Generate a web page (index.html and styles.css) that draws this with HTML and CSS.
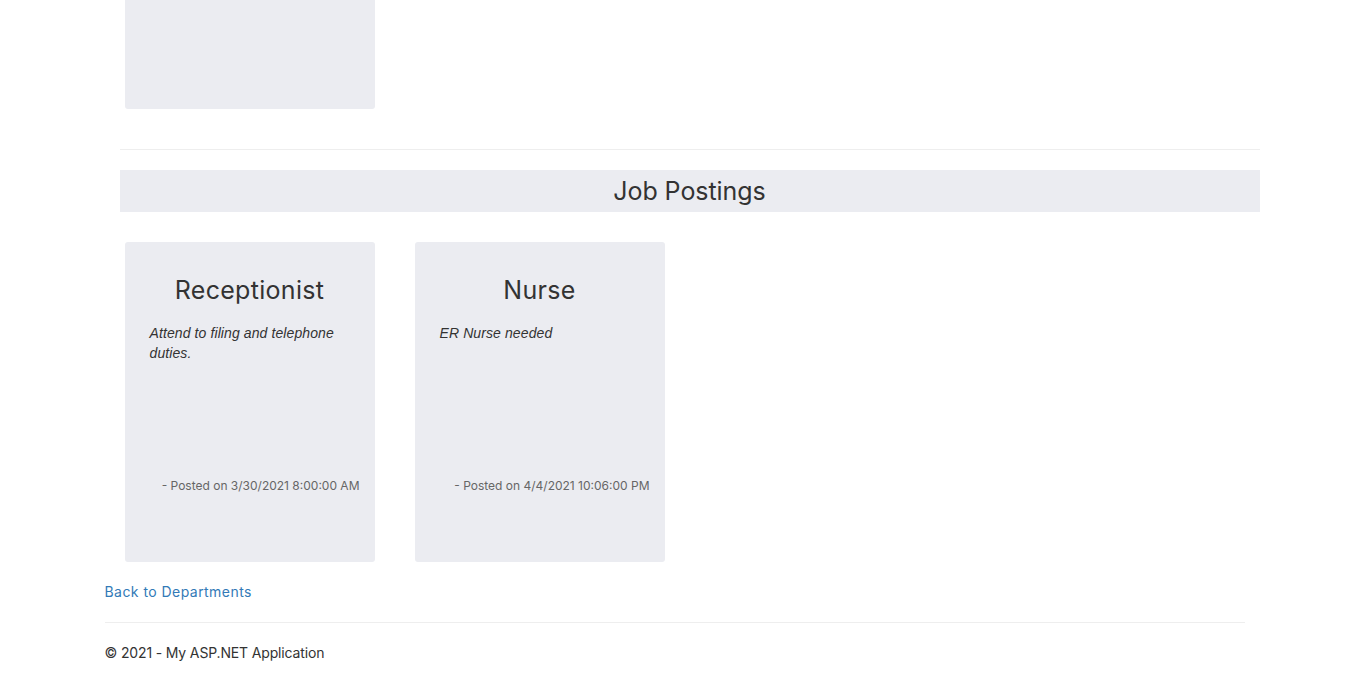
FILE: index.html
```html
<!DOCTYPE html>
<html>
<head>
<meta charset="utf-8">
<link rel="stylesheet" href="styles.css">
</head>
<body>
<div class="container">
  <div class="section">
    <div class="cards top-cards">
      <div class="card card-cut"></div>
    </div>
    <hr class="divider">
    <h2 class="section-title">Job Postings</h2>
    <div class="cards">
      <div class="card">
        <h3 class="card-title">Receptionist</h3>
        <p class="card-desc">Attend to filing and telephone duties.</p>
        <p class="card-posted">- Posted on 3/30/2021 8:00:00 AM</p>
      </div>
      <div class="card">
        <h3 class="card-title">Nurse</h3>
        <p class="card-desc">ER Nurse needed</p>
        <p class="card-posted">- Posted on 4/4/2021 10:06:00 PM</p>
      </div>
    </div>
  </div>
  <a class="back-link" href="#">Back to Departments</a>
  <hr class="footer-rule">
  <footer class="footer">© 2021 - My ASP.NET Application</footer>
</div>
</body>
</html>
```
FILE: styles.css
```css
html, body {
  margin: 0;
  padding: 0;
  background: #fff;
}
body {
  font-family: Inter, "Open Sans", sans-serif;
  color: #333;
  font-size: 14px;
}
.container {
  width: 1140px;
  margin: 0 auto;
  padding: 0 15px;
}
.section {
  margin-left: 15px;
  width: 1140px;
}
.cards {
  display: flex;
  gap: 40px;
  padding-left: 5px;
}
.card {
  width: 250px;
  height: 320px;
  box-sizing: border-box;
  background: #ebecf1;
  border-radius: 3px;
  padding: 34px 15px 0 25px;
  display: flex;
  flex-direction: column;
}
.card-cut {
  height: 109px;
  border-radius: 0 0 3px 3px;
}
.divider {
  margin: 40px 0 20px;
  border: 0;
  border-top: 1px solid #eee;
}
.section-title {
  margin: 0 0 30px;
  height: 42px;
  line-height: 42px;
  background: #ebecf1;
  text-align: center;
  font-weight: 400;
  font-size: 25px;
  letter-spacing: -0.05px;
  color: #333;
}
.card-title {
  margin: 0 10px 18px 0;
  font-weight: 400;
  font-size: 25px;
  letter-spacing: 0.3px;
  line-height: 29px;
  text-align: center;
  color: #333;
}
.card-desc {
  margin: 0;
  height: 154px;
  font-family: "Liberation Sans", Arial, sans-serif;
  font-style: italic;
  font-size: 14px;
  letter-spacing: 0.1px;
  line-height: 20px;
  color: #333;
}
.card-posted {
  margin: 0;
  font-size: 12px;
  line-height: 17px;
  text-align: right;
  color: #666;
}
.back-link {
  display: block;
  margin-top: 20px;
  line-height: 20px;
  color: #337ab7;
  text-decoration: none;
  font-size: 14px;
  letter-spacing: 0.45px;
}
.footer-rule {
  margin: 20px 0 20px;
  border: 0;
  border-top: 1px solid #eee;
}
.footer {
  line-height: 20px;
  font-size: 14px;
  letter-spacing: -0.15px;
  color: #333;
}
```
